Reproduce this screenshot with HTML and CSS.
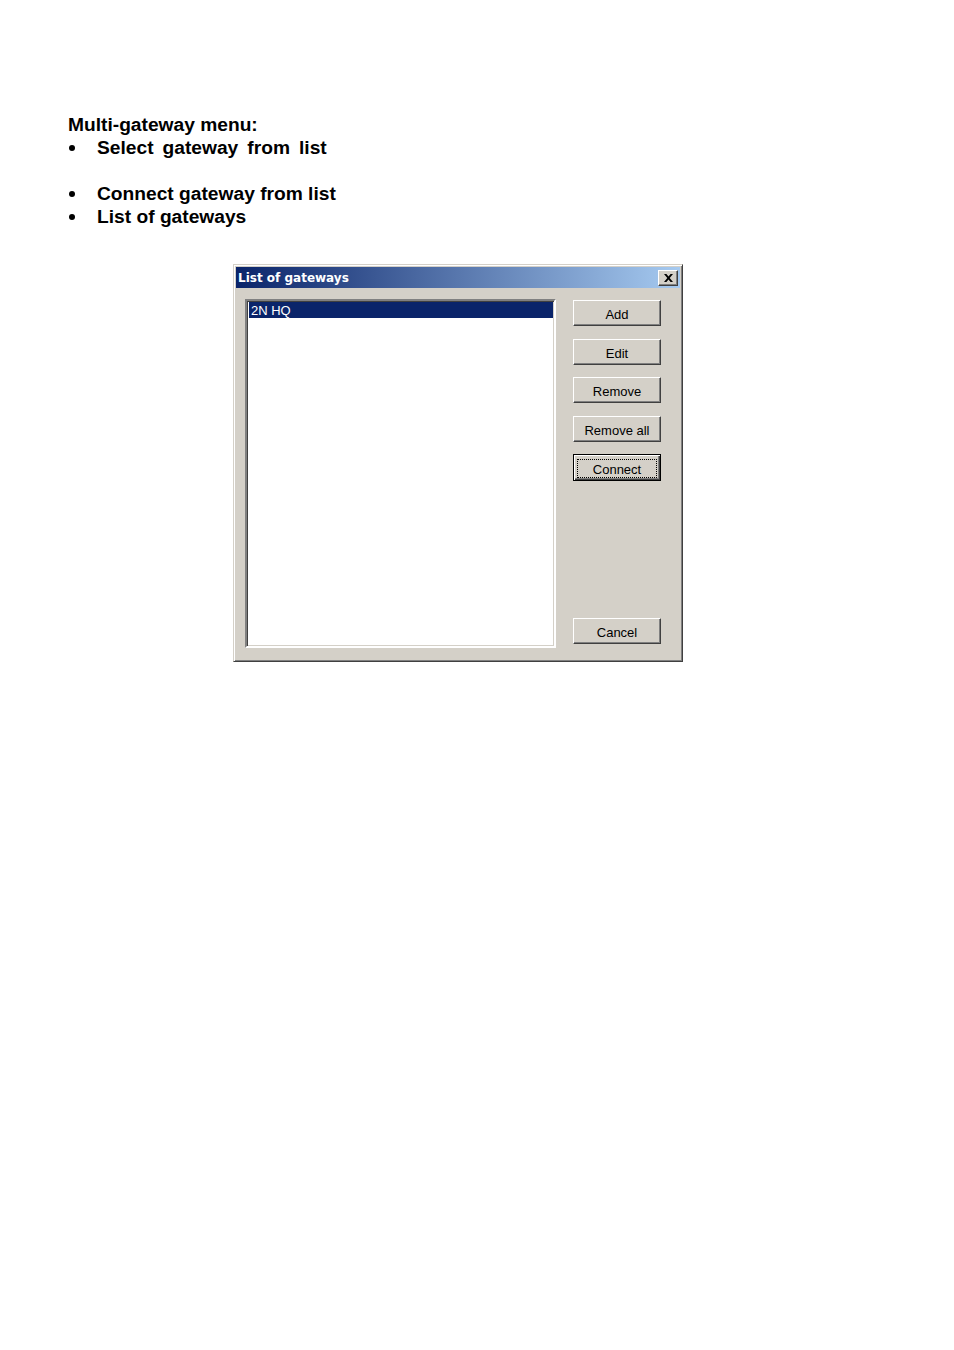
FILE: index.html
```html
<!DOCTYPE html>
<html>
<head>
<meta charset="utf-8">
<link rel="stylesheet" href="styles.css">
</head>
<body>
<div class="doc">
  <div class="heading">Multi-gateway menu:</div>
  <ul class="bullets">
    <li class="wide">Select gateway from list</li>
    <li class="gap"></li>
    <li>Connect gateway from list</li>
    <li>List of gateways</li>
  </ul>
  <div class="dialog">
    <div class="titlebar">
      <span class="title">List of gateways</span>
      <span class="close">
        <svg width="9" height="8" viewBox="0 0 9 8"><path d="M0 0h2.4l2.1 2.5L6.6 0H9L5.7 4 9 8H6.6L4.5 5.5 2.4 8H0l3.3-4z" fill="#000"/></svg>
      </span>
    </div>
    <div class="body">
      <div class="listbox">
        <div class="item selected">2N HQ</div>
      </div>
      <div class="buttons">
        <div class="btn">Add</div>
        <div class="btn">Edit</div>
        <div class="btn">Remove</div>
        <div class="btn">Remove all</div>
        <div class="btn default"><span class="focus">Connect</span></div>
        <div class="spacer"></div>
        <div class="btn">Cancel</div>
      </div>
    </div>
  </div>
</div>
</body>
</html>
```
FILE: styles.css
```css
html, body {
  margin: 0;
  padding: 0;
  background: #fff;
}
.doc {
  padding-top: 113px;
  padding-left: 68px;
  font-family: "Liberation Sans", Arial, sans-serif;
  font-weight: bold;
  font-size: 19.2px;
  color: #000;
}
.heading {
  line-height: 23px;
  height: 23px;
}
.bullets {
  margin: 0;
  padding: 0;
  list-style: none;
}
.bullets li {
  line-height: 23px;
  height: 23px;
  padding-left: 29px;
  position: relative;
}
.bullets li.wide {
  word-spacing: 3.7px;
}
.bullets li::before {
  content: "";
  position: absolute;
  left: 1px;
  top: 9px;
  width: 6px;
  height: 6px;
  border-radius: 50%;
  background: #000;
}
.bullets li.gap::before {
  display: none;
}
.dialog {
  margin-top: 36px;
  margin-left: 165px;
  width: 448px;
  height: 396px;
  background: #d4d0c8;
  border-style: solid;
  border-width: 1px;
  border-color: #d4d0c8 #404040 #404040 #d4d0c8;
  box-shadow: inset 1px 1px 0 #fff, inset -1px -1px 0 #808080;
  box-sizing: content-box;
  font-weight: normal;
  display: flex;
  flex-direction: column;
}
.titlebar {
  margin: 2px 2px 0 2px;
  height: 21px;
  background: linear-gradient(to right, #0a246a, #a6caf0);
  display: flex;
  align-items: center;
  justify-content: space-between;
  padding: 0 2px 0 2px;
}
.title {
  font-family: "DejaVu Sans", Verdana, sans-serif;
  font-weight: bold;
  font-size: 12px;
  color: #fff;
}
.close {
  width: 18px;
  height: 14px;
  background: #d4d0c8;
  border-style: solid;
  border-width: 1px;
  border-color: #fff #404040 #404040 #fff;
  box-shadow: inset -1px -1px 0 #808080;
  display: flex;
  align-items: center;
  justify-content: center;
}
.body {
  flex: 1;
  display: flex;
  align-items: flex-start;
  padding: 11px 21px 10px 11px;
  gap: 17px;
}
.listbox {
  width: 305px;
  height: 343px;
  background: #fff;
  border-style: solid;
  border-width: 2px;
  border-color: #808080 #fff #fff #808080;
  box-shadow: inset 1px 1px 0 #404040, inset -1px -1px 0 #d4d0c8;
  padding: 1px 1px;
  box-sizing: content-box;
}
.item {
  height: 16px;
  line-height: 17px;
  font-family: "Liberation Sans", Arial, sans-serif;
  font-size: 13px;
  padding-left: 2px;
  margin-left: 1px;
}
.item.selected {
  background: #0a246a;
  color: #fff;
}
.buttons {
  width: 88px;
  height: 344px;
  display: flex;
  flex-direction: column;
  padding-top: 1px;
}
.btn {
  height: 26px;
  box-sizing: border-box;
  border-style: solid;
  border-width: 1px;
  border-color: #fff #404040 #404040 #fff;
  box-shadow: inset -1px -1px 0 #808080;
  display: flex;
  align-items: center;
  justify-content: center;
  font-family: "Liberation Sans", Arial, sans-serif;
  font-size: 13px;
  color: #000;
  margin-bottom: 12.5px;
  padding-top: 3px;
}
.btn.default {
  border: 1px solid #000;
  box-shadow: inset 1px 1px 0 #fff, inset -1px -1px 0 #404040, inset -2px -2px 0 #808080;
  height: 27px;
  padding-top: 1px;
}
.focus {
  display: flex;
  align-items: center;
  justify-content: center;
  width: 78px;
  height: 15px;
  padding-top: 2px;
  box-sizing: content-box;
  border: 1px dotted #000;
}
.spacer {
  flex: 1;
}
.buttons .btn:last-child {
  margin-bottom: 0;
}
```
